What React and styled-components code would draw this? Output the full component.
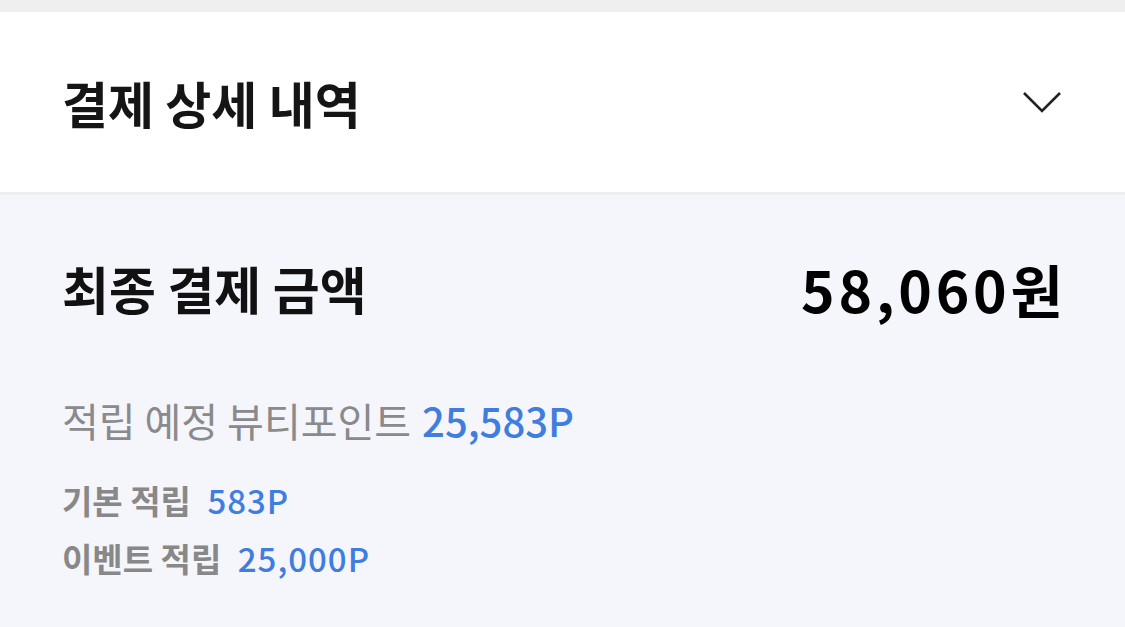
import React from 'react';
import styled, { createGlobalStyle } from 'styled-components';

const GlobalStyle = createGlobalStyle`
  html, body {
    margin: 0;
    padding: 0;
    background: #f5f5fc;
  }
  body {
    font-family: "Noto Sans CJK KR", "Noto Sans", sans-serif;
    color: #111;
  }
`;

const Page = styled.div`
  width: 1125px;
  min-height: 627px;
  background: #f5f5fc;
`;

const TopStrip = styled.div`
  height: 12px;
  background: #efefef;
`;

const Header = styled.div`
  height: 180px;
  background: #fff;
  border-bottom: 3px solid #eeeeee;
  display: flex;
  align-items: center;
  justify-content: space-between;
  padding: 0 63px 0 62px;
`;

const Title = styled.h2`
  margin: 0;
  font-size: 50px;
  font-weight: 700;
  color: #151515;
`;

const ToggleButton = styled.button`
  border: 0;
  background: none;
  padding: 0;
  display: flex;
  cursor: pointer;
`;

const Body = styled.div`
  padding: 0 62px;
`;

const TotalRow = styled.div`
  height: 186px;
  display: flex;
  align-items: center;
  justify-content: space-between;
`;

const TotalLabel = styled.span`
  font-size: 51px;
  font-weight: 700;
  color: #111;
`;

const TotalAmount = styled.span`
  font-size: 57px;
  font-weight: 700;
  color: #000;
  letter-spacing: 3.8px;
  margin-right: -3.8px;
`;

const EarnTitle = styled.div`
  margin-top: 13px;
  line-height: 52px;
  font-size: 40px;
  font-weight: 400;
  color: #8a8a8a;
`;

const Point = styled.span`
  color: #3f7ddf;
  font-weight: 500;
  letter-spacing: ${p => p.$spacing || 0}px;
  margin-left: ${p => p.$gap || 0}px;
`;

const DetailList = styled.div`
  margin-top: 25px;
`;

const DetailRow = styled.div`
  line-height: 58px;
  font-size: 33px;
  font-weight: 700;
  color: #888888;
`;

const Chevron = () => (
  <svg width="40" height="24" viewBox="0 0 40 24" fill="none">
    <path d="M2 3 L20 21 L38 3" stroke="#222" strokeWidth="2.6" />
  </svg>
);

const details = [
  { label: '기본 적립', value: '583P' },
  { label: '이벤트 적립', value: '25,000P' },
];

export default function App() {
  return (
    <Page>
      <GlobalStyle />
      <TopStrip />
      <Header>
        <Title>결제 상세 내역</Title>
        <ToggleButton aria-label="접기">
          <Chevron />
        </ToggleButton>
      </Header>
      <Body>
        <TotalRow>
          <TotalLabel>최종 결제 금액</TotalLabel>
          <TotalAmount>58,060원</TotalAmount>
        </TotalRow>
        <EarnTitle>
          적립 예정 뷰티포인트 <Point $gap={2}>25,583P</Point>
        </EarnTitle>
        <DetailList>
          {details.map(d => (
            <DetailRow key={d.label}>
              {d.label} <Point $gap={9} $spacing={1}>{d.value}</Point>
            </DetailRow>
          ))}
        </DetailList>
      </Body>
    </Page>
  );
}
